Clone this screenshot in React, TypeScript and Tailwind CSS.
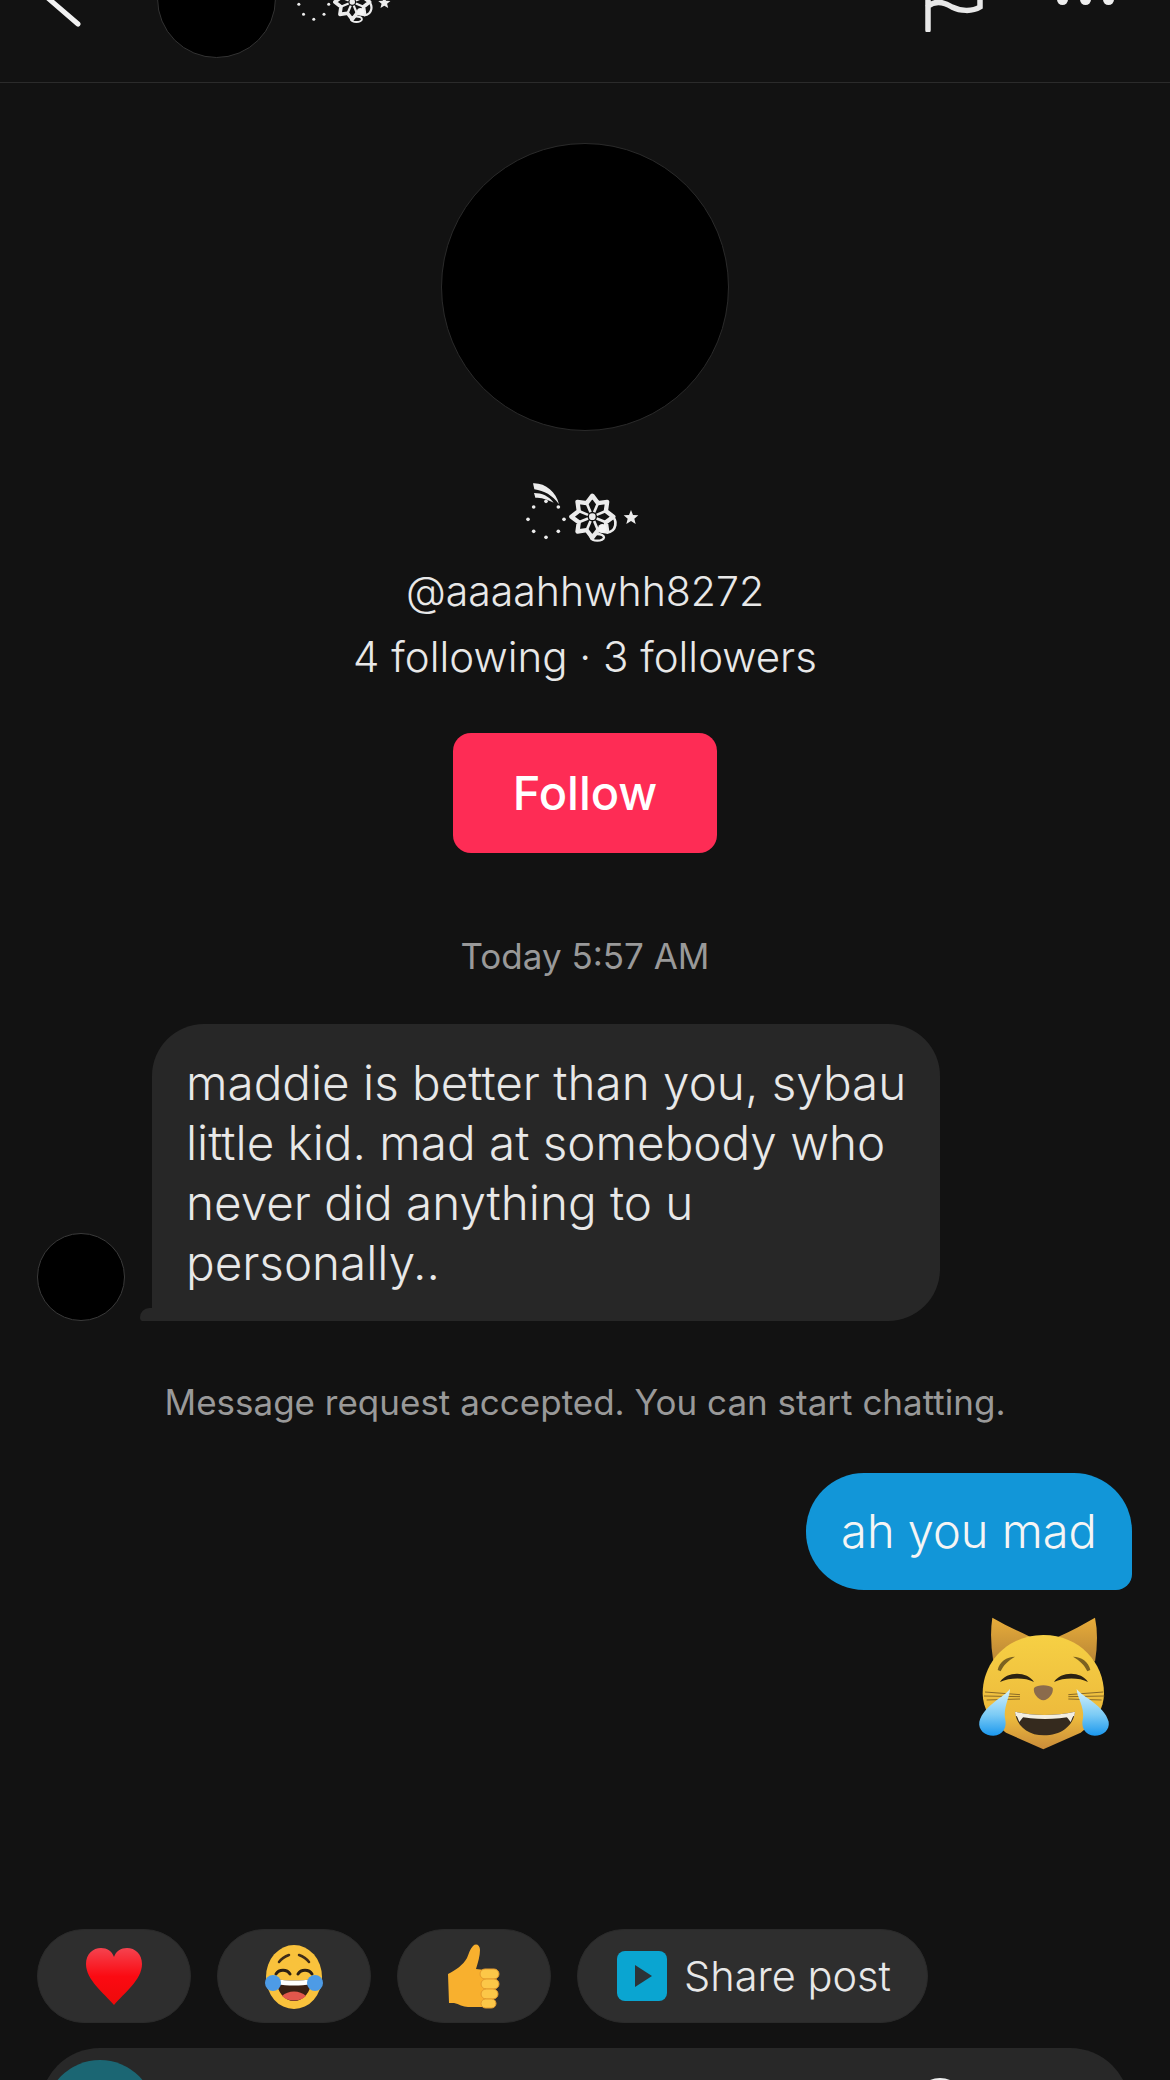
const font = "font-['Inter','Noto_Sans',sans-serif]";

const starPoints = Array.from({ length: 16 }, (_, i) => {
  const a = (i * Math.PI) / 8 - Math.PI / 2;
  const r = i % 2 === 0 ? 63 : 44;
  return `${337 + r * Math.cos(a)},${170 + r * Math.sin(a)}`;
}).join(" ");

const petalAngles = [22.5, 67.5, 112.5, 157.5, 202.5, 247.5, 292.5, 337.5];
const cometDots = [
  [198, 124], [235, 141], [252, 178], [235, 214], [198, 232], [161, 214], [144, 178], [161, 141],
];

// drawn in 3x crop coordinates of the name decoration
function NameGlyphs({ className }: { className: string }) {
  return (
    <svg viewBox="0 0 600 300" className={className} fill="none">
      <path d="M159 70C195 68 228 95 237 133C218 106 192 92 163 88Z" fill="#ececec" />
      <path d="M162 99C186 99 206 108 221 128C200 117 184 113 166 113Z" fill="#ececec" />
      {cometDots.map(([x, y]) => (
        <circle key={`${x}-${y}`} cx={x} cy={y} r="5.5" fill="#ececec" />
      ))}
      <polygon points={starPoints} stroke="#ececec" strokeWidth="13" strokeLinejoin="round" />
      {petalAngles.map((d) => (
        <line
          key={d}
          x1={337 + 14 * Math.cos((d * Math.PI) / 180)}
          y1={170 + 14 * Math.sin((d * Math.PI) / 180)}
          x2={337 + 42 * Math.cos((d * Math.PI) / 180)}
          y2={170 + 42 * Math.sin((d * Math.PI) / 180)}
          stroke="#ececec"
          strokeWidth="8"
        />
      ))}
      <circle cx="337" cy="170" r="10" fill="#ececec" />
      <path d="M392 165C415 180 410 215 380 218" stroke="#ececec" strokeWidth="8" />
      <ellipse cx="352" cy="232" rx="20" ry="10" stroke="#ececec" strokeWidth="7" />
      <circle cx="367" cy="205" r="13" fill="#f5f5f5" />
      <path d="M453 150l6 15 16 1-12 10 4 16-14-9-14 9 4-16-12-10 16-1z" fill="#ececec" />
    </svg>
  );
}

function CatEmoji() {
  return (
    <svg viewBox="0 0 510 540" className="h-[180px] w-[170px]">
      <defs>
        <linearGradient id="catFace" x1="0" y1="0" x2="0" y2="1">
          <stop offset="0" stopColor="#f6d044" />
          <stop offset="0.72" stopColor="#edba3c" />
          <stop offset="1" stopColor="#c98b3a" />
        </linearGradient>
        <linearGradient id="catEar" x1="0" y1="0" x2="0" y2="1">
          <stop offset="0" stopColor="#e8ad3a" />
          <stop offset="1" stopColor="#b98636" />
        </linearGradient>
        <linearGradient id="catTear" x1="0" y1="0" x2="0" y2="1">
          <stop offset="0" stopColor="#d8f2fb" />
          <stop offset="0.55" stopColor="#7ccbf5" />
          <stop offset="1" stopColor="#1b98ee" />
        </linearGradient>
      </defs>
      <path d="M97 83C130 102 170 122 210 140L100 215Q88 140 97 83Z" fill="url(#catEar)" />
      <path d="M405 83C372 102 335 122 295 140L405 215Q417 140 405 83Z" fill="url(#catEar)" />
      <path
        d="M250 135C360 135 432 220 432 310C432 355 408 395 362 428L250 478L138 428C92 395 68 355 68 310C68 220 140 135 250 135Z"
        fill="url(#catFace)"
      />
      <path d="M113 240C118 215 140 200 165 200C145 212 130 225 122 244Z" fill="#7b6220" />
      <path d="M391 240C386 215 364 200 339 200C359 212 374 225 382 244Z" fill="#7b6220" />
      <path d="M120 276C140 243 202 243 222 276C195 262 150 262 120 276Z" fill="#2b2213" />
      <path d="M282 276C302 243 364 243 384 276C357 262 312 262 282 276Z" fill="#2b2213" />
      <path d="M222 294C232 283 268 283 278 294C282 310 265 330 250 331C235 330 218 310 222 294Z" fill="#8b6b4c" />
      <path d="M75 306L180 314M72 318L180 320M80 330L180 327M430 306L325 314M433 318L325 320M425 330L325 327" stroke="#8a6a26" strokeWidth="3" />
      <path d="M165 365C220 378 285 378 345 365C340 410 300 436 252 436C205 436 170 410 165 365Z" fill="#352a1e" />
      <path d="M165 365C220 378 285 378 345 365L343 378C285 390 225 390 167 378Z" fill="#f3eee0" />
      <path d="M167 370L192 378L178 396ZM343 370L318 378L332 396Z" fill="#f3eee0" />
      <path d="M150 297C132 322 72 345 58 395C54 420 75 437 100 437C130 437 142 410 135 385C130 350 150 320 150 297Z" fill="url(#catTear)" />
      <path d="M350 297C368 322 432 345 446 395C450 420 429 437 404 437C374 437 362 410 369 385C374 350 350 320 350 297Z" fill="url(#catTear)" />
    </svg>
  );
}

function LaughEmoji() {
  return (
    <svg viewBox="0 0 58 65" className="h-[65px] w-[58px]">
      <ellipse cx="29" cy="33" rx="28" ry="32" fill="#f9c23c" />
      <path d="M14 18c3-4 7-6 10-7M44 18c-3-4-7-6-10-7" stroke="#3f2c18" strokeWidth="2.5" fill="none" strokeLinecap="round" />
      <path d="M11 30c3-5 11-5 14 0M33 30c3-5 11-5 14 0" stroke="#2c2014" strokeWidth="3" fill="none" strokeLinecap="round" />
      <path d="M11 35c11 2 25 2 36 0-1 14-9 22-18 22s-17-8-18-22z" fill="#3a2014" />
      <path d="M11 35c11 2 25 2 36 0l-1 5c-10 2-24 2-34 0z" fill="#ffffff" />
      <path d="M17 52c6-6 18-6 24 0-6 6-18 6-24 0z" fill="#e2574c" />
      <circle cx="8" cy="39" r="8" fill="#4d9be6" />
      <circle cx="50" cy="39" r="8" fill="#4d9be6" />
    </svg>
  );
}

function HeartEmoji() {
  return (
    <svg viewBox="0 0 56 57" className="h-[57px] w-[56px]">
      <defs>
        <linearGradient id="heart" x1="0" y1="0" x2="0" y2="1">
          <stop offset="0" stopColor="#f5434f" />
          <stop offset="0.5" stopColor="#fb0a12" />
          <stop offset="1" stopColor="#ee0a0a" />
        </linearGradient>
      </defs>
      <path d="M28 57C18 45 0 32 0 16 0 6 7 0 15 0c6 0 11 3 13 9 2-6 7-9 13-9 8 0 15 6 15 16 0 16-18 29-28 41z" fill="url(#heart)" />
    </svg>
  );
}

function ThumbEmoji() {
  return (
    <svg viewBox="0 0 52 65" className="h-[65px] w-[52px]">
      <path d="M0 30c8-4 15-9 19-16 2-5 3-9 6-12 3-3 7-1 7 4 0 6-2 12-4 19l9 1v37H20c-5 0-9-3-14-4H1z" fill="#f8b02e" />
      <g fill="#fcc748" stroke="#e39a2c" strokeWidth="1">
        <rect x="32" y="25" width="19" height="10" rx="5" />
        <rect x="33" y="35" width="18" height="10" rx="5" />
        <rect x="33" y="45" width="17" height="10" rx="5" />
        <rect x="33" y="55" width="15" height="9" rx="4.5" />
      </g>
    </svg>
  );
}

function Chip({ children }: { children: React.ReactNode }) {
  return (
    <div className="flex h-[94px] w-[154px] items-center justify-center rounded-[47px] border border-[#2a2a2a] bg-[#2e2e2e]">
      {children}
    </div>
  );
}

export default function App() {
  return (
    <div className={`${font} flex h-[2080px] w-[1170px] flex-col overflow-hidden bg-[#121212] font-[350] text-[#e8e8e8]`}>
      {/* top bar, scrolled partly out of view */}
      <div className="flex h-[83px] shrink-0 items-start justify-between border-b border-[#2b2b2b]">
        <div className="flex items-start">
          <svg viewBox="0 0 40 30" className="ml-[46px] h-[30px] w-[40px]" fill="none">
            <path d="M-4-7L32 24" stroke="#f2f2f2" strokeWidth="5" strokeLinecap="round" />
          </svg>
          <div className="-mt-[61px] ml-[71px] h-[119px] w-[119px] shrink-0 rounded-full border border-[#333] bg-black" />
          <NameGlyphs className="-mt-[45px] -ml-[17px] h-[83px] w-[166px]" />
        </div>
        <div className="flex items-start">
          <svg viewBox="0 0 60 32" className="h-[32px] w-[60px]" fill="none">
            <path d="M4 30V0M4 6c8-6 16-4 24 1 8 4 20 5 28 0V-4" stroke="#e8e8e8" strokeWidth="5.5" strokeLinecap="round" />
          </svg>
          <div className="ml-[73px] mr-[56px] flex gap-[12px]">
            <span className="-mt-[6px] h-[11px] w-[11px] rounded-full bg-[#eeeeee]" />
            <span className="-mt-[6px] h-[11px] w-[11px] rounded-full bg-[#eeeeee]" />
            <span className="-mt-[6px] h-[11px] w-[11px] rounded-full bg-[#eeeeee]" />
          </div>
        </div>
      </div>

      {/* profile */}
      <div className="flex flex-col items-center pt-[60px]">
        <div className="h-[288px] w-[288px] rounded-full border border-[#2a2a2a] bg-black" />
        <NameGlyphs className="mt-[29px] h-[100px] w-[200px] -translate-x-[5px]" />
        <div className="mt-[7px] text-[41px] leading-[48px]">@aaaahhwhh8272</div>
        <div className="mt-[18px] text-[42px] leading-[48px]">4 following · 3 followers</div>
        <button className="mt-[52px] h-[120px] w-[264px] rounded-[18px] bg-[#fe2c55] text-[47px] font-medium text-white">
          Follow
        </button>
        <div className="mt-[82px] text-[35px] leading-[42px] font-normal text-[#999999]">Today 5:57 AM</div>
      </div>

      {/* messages */}
      <div className="mt-[47px] flex items-end pl-[37px]">
        <div className="h-[88px] w-[88px] rounded-full border border-[#3a3a3a] bg-black" />
        <div className="relative ml-[27px] h-[297px] w-[788px] rounded-[52px] rounded-bl-none bg-[#272727] py-[29px] pl-[34px] text-[47.6px] leading-[60px]">
          <span className="absolute -left-[12px] bottom-0 h-[13px] w-[13px] rounded-tl-[13px] rounded-bl-[5px] bg-[#272727]" />
          maddie is better than you, sybau
          <br />
          little kid. mad at somebody who
          <br />
          never did anything to u
          <br />
          personally..
        </div>
      </div>
      <div className="mt-[60px] text-center text-[35px] leading-[42px] font-normal text-[#999999]">
        Message request accepted. You can start chatting.
      </div>
      <div className="mt-[50px] flex justify-end pr-[38px]">
        <div className="flex h-[117px] w-[326px] items-center justify-center rounded-[58px] rounded-br-[16px] bg-[#1296d8] text-[47px] text-[#f5f5f5]">
          ah you mad
        </div>
      </div>
      <div className="flex justify-end pr-[40px]">
        <CatEmoji />
      </div>

      {/* quick replies and input */}
      <div className="mt-auto flex gap-[26px] pl-[37px]">
        <Chip><HeartEmoji /></Chip>
        <Chip><LaughEmoji /></Chip>
        <Chip><ThumbEmoji /></Chip>
        <div className="flex h-[94px] w-[351px] items-center rounded-[47px] border border-[#2a2a2a] bg-[#2e2e2e] pl-[39px]">
          <div className="flex h-[50px] w-[50px] items-center justify-center rounded-[8px] bg-[#0aa5d1]">
            <div className="ml-[2px] h-0 w-0 border-y-[11px] border-l-[17px] border-y-transparent border-l-[#2c3338]" />
          </div>
          <span className="ml-[17px] text-[41.5px]">Share post</span>
        </div>
      </div>
      <div className="mt-[25px] ml-[40px] -mb-[68px] flex h-[100px] w-[1090px] shrink-0 items-start rounded-t-[60px] bg-[#282828] pt-[12px] pl-[5px]">
        <div className="h-[110px] w-[110px] shrink-0 rounded-full bg-[#1b6673]" />
        <div className="mt-[18px] ml-auto mr-[165px] h-[50px] w-[50px] rounded-full border-4 border-[#eeeeee]" />
      </div>
    </div>
  );
}
